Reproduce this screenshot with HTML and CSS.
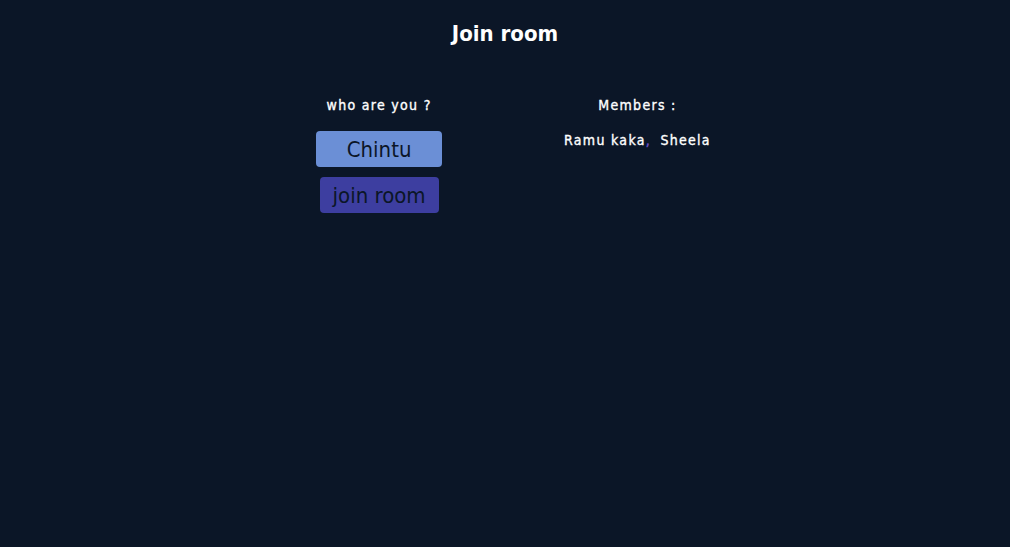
FILE: index.html
```html
<!DOCTYPE html>
<html>
<head>
<meta charset="utf-8">
<link rel="stylesheet" href="styles.css">
</head>
<body>
<div class="page">
  <h1 class="title">Join room</h1>
  <div class="columns">
    <div class="col col-left">
      <div class="label">who are you ?</div>
      <div class="name-box">Chintu</div>
      <button class="join-btn">join room</button>
    </div>
    <div class="col col-right">
      <div class="label">Members :</div>
      <div class="members">Ramu kaka<span class="comma">,</span> Sheela</div>
    </div>
  </div>
</div>
</body>
</html>
```
FILE: styles.css
```css
html, body {
  margin: 0;
  padding: 0;
  background: #0b1627;
  height: 100%;
}
body {
  font-family: "DejaVu Sans Condensed", "DejaVu Sans", sans-serif;
  color: #ffffff;
}
.page {
  display: flex;
  flex-direction: column;
  align-items: center;
  padding-top: 20px;
}
.title {
  margin: 0;
  font-size: 22px;
  font-weight: bold;
  line-height: 28px;
}
.columns {
  display: flex;
  gap: 122px;
  margin-top: 48px;
  margin-left: 17px;
}
.col {
  display: flex;
  flex-direction: column;
  align-items: center;
}
.label {
  font-size: 14px;
  letter-spacing: 1.3px;
  line-height: 18px;
  -webkit-text-stroke: 0.35px #ffffff;
}
.name-box {
  margin-top: 17px;
  width: 126px;
  height: 36px;
  background: #6b8fd6;
  border-radius: 4px;
  color: #0b1627;
  font-size: 22px;
  display: flex;
  align-items: center;
  justify-content: center;
}
.join-btn {
  margin-top: 10px;
  width: 119px;
  height: 36px;
  background: #3d3ea0;
  border: none;
  border-radius: 4px;
  color: #0b1627;
  font-family: inherit;
  font-size: 22px;
  padding: 0;
}
.members {
  margin-top: 17px;
  font-size: 14px;
  letter-spacing: 1.3px;
  line-height: 18px;
  -webkit-text-stroke: 0.35px #ffffff;
}
.comma {
  color: #6d52c8;
  -webkit-text-stroke: 0.4px #6d52c8;
  margin-right: 4px;
}
```
